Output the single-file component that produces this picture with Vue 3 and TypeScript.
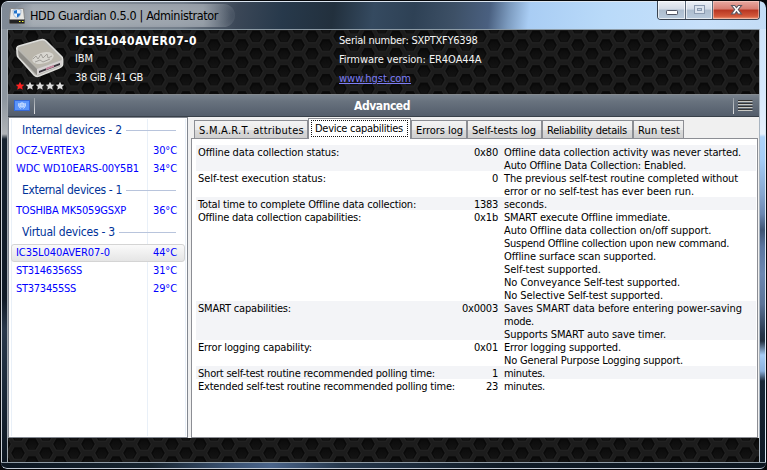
<script setup lang="ts">
interface Device { name: string; w: number; temp: string; selected?: boolean }
interface Group { title: string; w: number; devices: Device[] }
interface Line { text: string; w: number }
interface Row { label: string; w: number; value: string; vw: number; lines: Line[] }

const groups: Group[] = [
  { title: 'Internal devices - 2', w: 100, devices: [
    { name: 'OCZ-VERTEX3', w: 69, temp: '30°C' },
    { name: 'WDC WD10EARS-00Y5B1', w: 123, temp: '34°C' }
  ] },
  { title: 'External devices - 1', w: 100, devices: [
    { name: 'TOSHIBA MK5059GSXP', w: 110, temp: '36°C' }
  ] },
  { title: 'Virtual devices - 3', w: 93, devices: [
    { name: 'IC35L040AVER07-0', w: 94, temp: '44°C', selected: true },
    { name: 'ST3146356SS', w: 66, temp: '31°C' },
    { name: 'ST373455SS', w: 60, temp: '29°C' }
  ] }
]

const tabs = [
  { text: 'S.M.A.R.T. attributes', w: 105, box: 114 },
  { text: 'Device capabilities', w: 88, box: 103, active: true },
  { text: 'Errors log', w: 47, box: 56 },
  { text: 'Self-tests log', w: 64, box: 75 },
  { text: 'Reliability details', w: 80, box: 91 },
  { text: 'Run test', w: 42, box: 51 }
]

const rows: Row[] = [
  { label: 'Offline data collection status:', w: 141, value: '0x80', vw: 24, lines: [
    { text: 'Offline data collection activity was never started.', w: 237 },
    { text: 'Auto Offline Data Collection: Enabled.', w: 182 }
  ] },
  { label: 'Self-test execution status:', w: 128, value: '0', vw: 6, lines: [
    { text: 'The previous self-test routine completed without', w: 234 },
    { text: 'error or no self-test has ever been run.', w: 190 }
  ] },
  { label: 'Total time to complete Offline data collection:', w: 218, value: '1383', vw: 24, lines: [
    { text: 'seconds.', w: 43 }
  ] },
  { label: 'Offline data collection capabilities:', w: 163, value: '0x1b', vw: 24, lines: [
    { text: 'SMART execute Offline immediate.', w: 166 },
    { text: 'Auto Offline data collection on/off support.', w: 207 },
    { text: 'Suspend Offline collection upon new command.', w: 225 },
    { text: 'Offline surface scan supported.', w: 152 },
    { text: 'Self-test supported.', w: 97 },
    { text: 'No Conveyance Self-test supported.', w: 176 },
    { text: 'No Selective Self-test supported.', w: 159 }
  ] },
  { label: 'SMART capabilities:', w: 93, value: '0x0003', vw: 36, lines: [
    { text: 'Saves SMART data before entering power-saving', w: 238 },
    { text: 'mode.', w: 30 },
    { text: 'Supports SMART auto save timer.', w: 162 }
  ] },
  { label: 'Error logging capability:', w: 114, value: '0x01', vw: 24, lines: [
    { text: 'Error logging supported.', w: 117 },
    { text: 'No General Purpose Logging support.', w: 179 }
  ] },
  { label: 'Short self-test routine recommended polling time:', w: 237, value: '1', vw: 6, lines: [
    { text: 'minutes.', w: 41 }
  ] },
  { label: 'Extended self-test routine recommended polling time:', w: 257, value: '23', vw: 12, lines: [
    { text: 'minutes.', w: 41 }
  ] }
]

const starColors = ['#f22', '#ddd', '#ddd', '#ddd', '#ddd']

/* Tracks a label so that it fills the given width in pixels. */
const vFit = {
  mounted(el: HTMLElement, binding: { value: number }) {
    const natural = el.getBoundingClientRect().width
    const count = (el.textContent ?? '').length
    el.style.letterSpacing = `${(binding.value - natural) / count}px`
  }
}
</script>

<template>
  <div class="window">
    <header class="titlebar">
      <svg class="app-icon" width="16" height="16" viewBox="0 0 16 16">
        <path d="M1.500.5h13l1 10v5H.5v-5z" fill="#e9e9e6" stroke="#888" />
        <path d="M.5 11.500h15v4H.5z" fill="#222" />
        <path d="M4 2l4-1 4 1c0 4-1 7-4 8-3-1-4-4-4-8z" fill="#e8f1fb" stroke="#8fa8c4" stroke-width=".7" />
        <path d="M5 2.800L8 2v3.500h3.300C11 7.500 10 8.800 8 9.300V5.500H5z" fill="#1f72c9" />
        <path d="M10 13h1.500v1H10zM13 13h1.500v1H13z" fill="#ff3" />
      </svg>
      <span class="caption"><span v-fit="188">HDD Guardian 0.5.0 | Administrator</span></span>
      <div class="controls">
        <span class="ctl min"><svg width="28" height="18" viewBox="0 0 28 18"><rect x="8.500" y="9.500" width="11" height="4" rx=".8" fill="#fff" stroke="#4e5261" /></svg></span>
        <span class="ctl max"><svg width="26" height="18" viewBox="0 0 26 18"><rect x="8.500" y="4.500" width="10" height="8" fill="#dce4ee" stroke="#8c9bb0" /><rect x="11.500" y="7.500" width="4" height="2" fill="#c6d1df" stroke="#8c9bb0" /></svg></span>
        <span class="ctl close"><svg width="46" height="18" viewBox="0 0 46 18"><path d="M18.500 4.500h3.200l1.800 2.200 1.800-2.200h3.200l-3.200 4 3.200 4.500h-3.300l-1.700-2.300-1.700 2.300h-3.300l3.200-4.500z" fill="#fff" stroke="#5c5862" stroke-width="1.100" /></svg></span>
      </div>
    </header>

    <div class="body">
      <i class="side left"></i>
      <main class="client">
        <section class="summary">
          <svg class="mesh" width="751" height="64">
            <defs>
              <linearGradient id="hole" x1="0" y1="0" x2="0" y2="1">
                <stop offset="0" stop-color="#0c0c0c" /><stop offset="1" stop-color="#131313" />
              </linearGradient>
              <g id="cell">
                <path d="M-8 .5L-4.300-6H4.300L8 .5 4.300 7H-4.300z" fill="#212121" />
                <path d="M-6.800 0L-3.600-5.800H3.600L6.800 0 3.600 5.500H-3.600z" fill="#090909" />
                <path d="M-5.300 .8L-2.700-3.700H2.700L5.300 .8 2.700 5H-2.700z" fill="url(#hole)" />
              </g>
              <pattern id="hex" x="10" y="15" width="28" height="17.330" patternUnits="userSpaceOnUse">
                <rect width="28" height="17.400" fill="#1c1c1c" />
                <use href="#cell" x="0" y="0" /><use href="#cell" x="28" y="0" />
                <use href="#cell" x="0" y="17.330" /><use href="#cell" x="28" y="17.330" />
                <use href="#cell" x="14" y="8.670" />
              </pattern>
            </defs>
            <rect width="751" height="64" fill="url(#hex)" />
          </svg>
          <div class="drive">
            <svg width="50" height="42" viewBox="0 0 50 42">
              <path d="M2 12Q1 9 4 8L25 2Q29 1 31 3L47 19Q48 20 47.500 27 47 29 44 30L24 38Q21 39 19 37L3 19Q2 18 2 12z" fill="#b8b6b0" stroke="#dededb" stroke-width="1.600" />
              <path d="M4 10L27 3 46 21 22 30z" fill="#bab6ac" />
              <path d="M3 12L22 31V37L4 19z" fill="#8f8d88" />
              <path d="M22 31L47 22V27L22 37z" fill="#d6d2d2" />
              <path d="M24 33L45 25V27L24 35z" fill="#39343c" />
              <path d="M31 30L39 27V29L31 32z" fill="#c888a0" />
              <ellipse cx="28" cy="20" rx="11" ry="5.500" transform="rotate(-14 28 20)" fill="#d8d6d0" />
              <path d="M18 21l3-3 2 3 3-5 2 4 4-4 1 4 4-2M20 24l5-2 3 2 7-3" fill="none" stroke="#a19e99" stroke-width="1" />
            </svg>
            <svg class="stars" width="50" height="10" viewBox="0 0 50 10">
              <path v-for="(c, i) in starColors" :key="i" :transform="`translate(${i * 10} 0)`" :fill="c" d="M5 .8l1.300 2.700 3 .3-2.200 2 .7 3L5 7.300 2.200 8.800l.7-3-2.200-2 3-.3z" />
            </svg>
          </div>
          <div class="identity">
            <strong><span v-fit="122">IC35L040AVER07-0</span></strong>
            <p><span v-fit="18">IBM</span></p>
            <p><span v-fit="68">38 GiB / 41 GB</span></p>
          </div>
          <div class="details">
            <p><span v-fit="138.500">Serial number: SXPTXFY6398</span></p>
            <p><span v-fit="142.500">Firmware version: ER4OA44A</span></p>
            <p><a v-fit="72">www.hgst.com</a></p>
          </div>
        </section>

        <nav class="toolbar">
          <svg class="flag" width="16" height="11" viewBox="0 0 16 11">
            <rect x=".5" y=".5" width="15" height="10" fill="#5a94fb" stroke="#3568d6" />
            <path d="M5 3Q3.500 6 6.500 8.500M11 3Q12.500 6 9.500 8.500" fill="none" stroke="#dceaff" />
            <circle cx="8" cy="5" r="2.200" fill="#9fc3ff" stroke="#dceaff" stroke-width=".8" />
          </svg>
          <i class="sep"></i>
          <b class="heading"><span v-fit="56">Advanced</span></b>
          <i class="sep"></i>
          <svg class="menu" width="15" height="12" viewBox="0 0 15 12">
            <path d="M0 .5h14.500M0 3.500h14.500M0 6.500h14.500M0 9.500h14.500" stroke="#343434" />
            <path d="M0 1.500h14.500M0 4.500h14.500M0 7.500h14.500M0 10.500h14.500" stroke="#c9c9c4" />
          </svg>
        </nav>

        <div class="content">
          <aside class="devices">
            <i class="rule r1"></i><i class="rule r2"></i><i class="rule r3"></i>
            <section v-for="g in groups" :key="g.title">
              <h2><span v-fit="g.w">{{ g.title }}</span><i></i></h2>
              <div v-for="d in g.devices" :key="d.name" class="device" :class="{ selected: d.selected }">
                <div><span v-fit="d.w">{{ d.name }}</span></div>
                <span v-fit="24">{{ d.temp }}</span>
              </div>
            </section>
          </aside>

          <div class="pane">
            <div class="tabs">
              <div v-for="t in tabs" :key="t.text" class="tab" :class="{ active: t.active }" :style="{ width: t.box + 'px' }">
                <span v-fit="t.w">{{ t.text }}</span>
              </div>
            </div>
            <div class="page">
              <div v-for="r in rows" :key="r.label" class="row">
                <p><span v-fit="r.w">{{ r.label }}</span></p>
                <p class="value"><span v-fit="r.vw">{{ r.value }}</span></p>
                <div>
                  <p v-for="l in r.lines" :key="l.text"><span v-fit="l.w">{{ l.text }}</span></p>
                </div>
              </div>
            </div>
          </div>
        </div>

        <footer class="foot">
          <svg width="751" height="24">
            <defs>
              <pattern id="hexfoot" x="10" y="15" width="28" height="18" patternUnits="userSpaceOnUse">
                <rect width="28" height="18" fill="#1c1c1c" />
                <use href="#cell" x="0" y="0" /><use href="#cell" x="28" y="0" />
                <use href="#cell" x="0" y="18" /><use href="#cell" x="28" y="18" />
                <use href="#cell" x="14" y="9" />
              </pattern>
            </defs>
            <rect width="751" height="24" fill="url(#hexfoot)" />
          </svg>
        </footer>
      </main>
      <i class="side right"></i>
    </div>
    <div class="bottom"></div>
  </div>
</template>

<style>
body { background: #05070a; overflow: hidden; }
</style>

<style scoped>
* { box-sizing: border-box; }
p, h2 { margin: 0; font-weight: normal; }
i { display: block; }
svg { display: block; flex: none; }
.window {
  width: 767px; height: 470px; display: flex; flex-direction: column; overflow: hidden;
  font: 11px/13px "DejaVu Sans Condensed", "DejaVu Sans", sans-serif;
  font-stretch: condensed; white-space: nowrap; color: #000;
  border: 1px solid #05070a; border-radius: 8px 8px 7px 7px; background: #1a2635;
}
.titlebar {
  height: 28px; flex: none; display: flex; align-items: flex-start; padding-left: 8px;
  border-top: 1px solid #dbe5f0; border-left: 1px solid #c5ccd4; border-radius: 6px 6px 0 0;
  background: linear-gradient(97deg, #7f8995 0, #868f99 90px, #727d8a 180px, #3b4757 235px, #27394b 280px, #22303d 330px, #354a60 370px, #2e4155 410px, #3d5066 450px, #4a6080 485px, #7d9cc0 505px, #a9cdf4 525px, #b9daf9 600px, #c7e0fa 700px, #c3dcf5 767px);
}
.app-icon { position: relative; z-index: 1; margin-top: 6px; margin-left: -1px; }
.caption { margin: 2px 0 0 -12px; padding: 4px 17px; font-size: 12.500px; line-height: 15px; }
.caption { border-radius: 12px; background: linear-gradient(90deg, rgb(176 182 188 / 0), rgb(176 182 188 / .8) 20px, rgb(166 173 181 / .8) 190px, rgb(150 160 170 / 0)); box-shadow: inset 0 0 5px rgb(120 130 142 / .4); }
.controls {
  margin: -1px 6px 0 auto; width: 103px; height: 19px; display: flex; overflow: hidden;
  border: 1px solid #38424f; border-top: 0; border-radius: 0 0 4px 4px;
}
.ctl { background: linear-gradient(#edf1f6, #d4dce7 45%, #adbdce 50%, #b9cadc); box-shadow: inset 0 0 0 1px rgb(255 255 255 / .65); }
.min { width: 28px; border-right: 1px solid #596778; }
.max { width: 27px; border-right: 1px solid #596778; }
.close { flex: 1; background: linear-gradient(#e8aaa2, #d77d72 45%, #b73521 50%, #d4593b 85%, #ed9c7d); box-shadow: inset 0 0 0 1px rgb(255 220 210 / .5); }
.body { height: 433px; flex: none; display: grid; grid-template-columns: 7px 751px 7px; }
.side.left { border-left: 1px solid #cad0d8; border-right: 1px solid #a4abb2; background: linear-gradient(#8d969f 0, #8d969f 70px, #b0b4b8 105px, #172330 110px, #101a26 270px, #29384b 300px, #1a2939 360px, #0c1520); }
.side.right { border-left: 1px solid #a8b4c0; border-right: 1px solid #dce8f4; background: linear-gradient(#cfe4fb 0, #d5e8fc 60px, #e6f1fc 105px, #aed3f9 108px, #a5cdf7 130px, #86a6cf 165px, #6c87b1 185px, #3f5473 201px, #5b76a0 218px, #6c87b1 245px, #5c7498 275px, #26354a 305px, #22303f 312px, #a6ccf5 326px, #8bb0dc 342px, #1b2939 352px, #0e1a25); }
.client { display: flex; flex-direction: column; border-top: 1px solid #8c9ba6; }
.summary { position: relative; height: 64px; flex: none; display: flex; color: #f4f4f4; overflow: hidden; }
.mesh { position: absolute; inset: 0; }
.drive, .identity, .details { position: relative; }
.drive { width: 67px; padding: 8px 0 0 7px; }
.stars { margin-top: 1px; }
.identity { width: 264px; }
.identity strong { display: block; margin-top: 3px; font: bold 12px/16px "DejaVu Sans Condensed", sans-serif; color: #fff; }
.identity p, .details p { height: 19px; line-height: 19px; }
.details { padding-top: 1px; }
.details a { color: #7d7df5; text-decoration: underline; }
.toolbar {
  height: 23px; flex: none; display: flex; align-items: center; padding: 0 6px 0 6px; color: #fff;
  background: linear-gradient(#79838e, #68727e 30%, #535d6b); border-top: 1px solid #858b91; border-bottom: 1px solid #384049;
}
.sep { width: 1px; height: 16px; margin-left: 4px; background: linear-gradient(#929aa2, #dedfe0); }
.heading { flex: 1; padding: 1px 0 0; text-align: center; font-size: 12px; }
.toolbar .menu { margin-left: 4px; }
.content { height: 321px; flex: none; display: flex; background: #f0f0f0; }
.devices { position: relative; width: 180px; height: 321px; padding-top: 3px; background: #fff; border: 1px solid #828790; color: #00f; }
.rule { position: absolute; top: 1px; bottom: 1px; width: 1px; background: #e9f0f8; }
.r1 { left: 2px; } .r2 { left: 138px; } .r3 { left: 176px; }
.devices section { position: relative; margin-bottom: 3px; }
h2 { height: 18px; display: flex; align-items: center; padding-left: 13px; color: #003399; font-size: 12px; line-height: 18px; }
h2 i { flex: 1; margin: 0 11px 0 4px; border-top: 1px solid #b8c4dc; }
.device { display: flex; justify-content: space-between; height: 18px; margin: 0 2px; padding: 0 7px 0 4px; line-height: 16px; border: 1px solid transparent; border-radius: 3px; }
h2 + .device { margin-top: 3px; }
.device.selected { border-color: #d4d4d4; background: linear-gradient(#fafafa, #e5e5e5); }
.pane { width: 571px; height: 321px; padding: 1px 1px 0 4px; }
.tabs { height: 20px; display: flex; align-items: flex-end; padding-left: 2px; }
.tab { height: 18px; padding-left: 4px; line-height: 19px; border: 1px solid #8c8e94; border-bottom: 0; background: linear-gradient(#f3f3f3, #ebebeb 50%, #dcdcdc 50%, #cfcfcf); }
.tab.active { position: relative; height: 21px; margin-bottom: -1px; padding: 1px 0 0 6px; line-height: 17px; background: #fff; }
.tab.active::after { content: ""; position: absolute; inset: 1px 2px 2px 2px; border: 1px dotted #111; }
.page { height: 300px; margin-left: -1px; padding: 6px 1px 0 4px; background: #fff; border: 1px solid #8c8e94; }
.row { display: grid; grid-template-columns: 260px 40px 1fr; padding-left: 2px; }
.row > :last-child { padding-left: 6px; }
.row:nth-child(odd) { background: #f3f4f7; }
.row p { height: 13px; line-height: 15px; }
.value { text-align: right; }
.foot { height: 24px; flex: none; overflow: hidden; }
.bottom { height: 7px; flex: none; border-top: 1px solid #8f9ba5; border-bottom: 1px solid #c4ccd6; background: linear-gradient(90deg, #0c1621, #17242f 150px, #39506f 225px, #4a648a 270px, #26384c 340px, #101b26 500px, #0c1620); border-radius: 0 0 6px 6px; }
</style>
